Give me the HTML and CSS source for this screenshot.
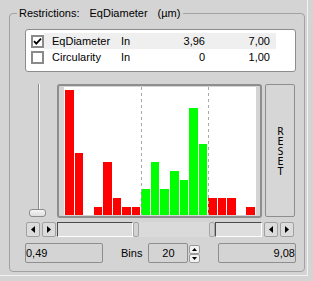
FILE: index.html
```html
<!DOCTYPE html>
<html lang="en">
<head>
    <meta charset="UTF-8">
    <title>Restrictions</title>
    <link rel="stylesheet" href="styles.css">
</head>
<body>
    <div class="window">
        <fieldset class="restrictions">
            <legend><span>Restrictions:</span><span class="legend-gap">EqDiameter</span><span class="legend-gap">(µm)</span></legend>

            <div class="group-body">
                <div class="param-list">
                    <div class="param-row">
                        <span class="check">
                            <svg width="9" height="9" viewBox="0 0 9 9"><path d="M1 4.2L3.3 6.6L8 1.6" fill="none" stroke="#000" stroke-width="1.8"/></svg>
                        </span>
                        <div class="cells selected">
                            <span class="name">EqDiameter</span>
                            <span class="mode">In</span>
                            <span class="num lo">3,96</span>
                            <span class="num hi">7,00</span>
                        </div>
                    </div>
                    <div class="param-row">
                        <span class="check"></span>
                        <div class="cells">
                            <span class="name">Circularity</span>
                            <span class="mode">In</span>
                            <span class="num lo">0</span>
                            <span class="num hi">1,00</span>
                        </div>
                    </div>
                </div>

                <div class="histogram-area">
                    <div class="vslider">
                        <div class="vtrack"></div>
                        <div class="vthumb"></div>
                    </div>

                    <div class="plot">
                        <div class="bins">
                            <div class="bar out" style="height:125px"></div>
                            <div class="bar out" style="height:62px"></div>
                            <div class="bar out" style="height:0"></div>
                            <div class="bar out" style="height:8px"></div>
                            <div class="bar out" style="height:53px"></div>
                            <div class="bar out" style="height:17px"></div>
                            <div class="bar out" style="height:8px"></div>
                            <div class="bar out" style="height:8px"></div>
                            <div class="bar in" style="height:26px"></div>
                            <div class="bar in" style="height:53px"></div>
                            <div class="bar in" style="height:26px"></div>
                            <div class="bar in" style="height:44px"></div>
                            <div class="bar in" style="height:35px"></div>
                            <div class="bar in" style="height:107px"></div>
                            <div class="bar in" style="height:71px"></div>
                            <div class="bar out" style="height:17px"></div>
                            <div class="bar out" style="height:17px"></div>
                            <div class="bar out" style="height:17px"></div>
                            <div class="bar out" style="height:0"></div>
                            <div class="bar out" style="height:8px"></div>

                            <div class="limit" style="left:77px"></div>
                            <div class="limit" style="left:144px"></div>
                        </div>
                    </div>

                    <button class="reset"><span>RESET</span></button>
                </div>

                <div class="range-row">
                    <button class="arrow"><svg width="4" height="7" viewBox="0 0 4 7"><path d="M4 0V7L0 3.5Z"/></svg></button>
                    <button class="arrow"><svg width="4" height="7" viewBox="0 0 4 7"><path d="M0 0V7L4 3.5Z"/></svg></button>
                    <div class="range">
                        <div class="range-well lo"></div>
                        <div class="range-thumb"></div>
                        <div class="range-mid"></div>
                        <div class="range-thumb"></div>
                        <div class="range-well hi"></div>
                    </div>
                    <button class="arrow"><svg width="4" height="7" viewBox="0 0 4 7"><path d="M4 0V7L0 3.5Z"/></svg></button>
                    <button class="arrow"><svg width="4" height="7" viewBox="0 0 4 7"><path d="M0 0V7L4 3.5Z"/></svg></button>
                </div>

                <div class="value-row">
                    <div class="field">0,49</div>
                    <span class="bins-label">Bins</span>
                    <div class="field spin-field">20</div>
                    <div class="spin">
                        <button class="spin-btn"><svg width="5" height="3" viewBox="0 0 5 3"><path d="M0 3H5L2.5 0Z"/></svg></button>
                        <button class="spin-btn"><svg width="5" height="3" viewBox="0 0 5 3"><path d="M0 0H5L2.5 3Z"/></svg></button>
                    </div>
                    <div class="field right">9,08</div>
                </div>
            </div>
        </fieldset>
    </div>
</body>
</html>
```

FILE: styles.css
```css
* {
    box-sizing: border-box;
}

body {
    margin: 0;
    background: #d4d4d4;
    font-family: "Liberation Sans", Arial, sans-serif;
    font-size: 11px;
    color: #000;
}

.window {
    width: 308px;
    height: 276px;
    padding: 7px 0 0 9px;
    border-right: 1px solid #f2f2f2;
    border-bottom: 1px solid #f2f2f2;
}

/* Group box */
.restrictions {
    margin: 0;
    width: 295px;
    height: 265px;
    padding: 9px 8px 0 15px;
    border: 1px solid #a2a2a2;
    border-radius: 4px;
}

.restrictions legend {
    margin-left: -8px;
    padding: 0 3px 0 2px;
    line-height: 13px;
}

.legend-gap {
    margin-left: 10px;
}

.group-body {
    display: flex;
    flex-direction: column;
}

/* Parameter list */
.param-list {
    height: 43px;
    background: #fff;
    border: 1px solid #8c8c8c;
    border-radius: 3px;
    padding: 3px 0 0 5px;
}

.param-row {
    display: flex;
    align-items: center;
    height: 16px;
}

.check {
    width: 13px;
    height: 13px;
    border: 2px solid #8a8a8a;
    background: #fff;
    display: flex;
    align-items: center;
    justify-content: center;
}

.cells {
    display: flex;
    align-items: center;
    width: 232px;
    height: 100%;
    padding-left: 8px;
}

.cells.selected {
    background: #efefef;
}

.name {
    width: 69px;
}

.mode {
    width: 40px;
}

.num {
    text-align: right;
}

.num.lo {
    width: 44px;
}

.num.hi {
    width: 65px;
}

/* Histogram */
.histogram-area {
    display: flex;
    height: 134px;
    margin-top: 12px;
}

.vslider {
    width: 32px;
    display: flex;
    flex-direction: column;
    padding-bottom: 1px;
}

.vtrack {
    flex: 1;
    width: 2px;
    margin-left: 13px;
    border-left: 1px solid #8a8a8a;
    border-right: 1px solid #fafafa;
}

.vthumb {
    width: 17px;
    height: 8px;
    margin: -1px 0 0 4px;
    border: 1px solid #8c8c8c;
    border-radius: 3px;
    background: linear-gradient(#f6f6f6, #dedede);
}

.plot {
    width: 205px;
    height: 134px;
    border: 2px solid #8e8e8e;
    border-radius: 3px;
    padding: 1px 4px 1px 5px;
}

.bins {
    position: relative;
    height: 100%;
    background: #fff;
    display: flex;
    align-items: flex-end;
    gap: 1px;
    padding: 0 1px;
}

.bar {
    flex: 1;
}

.bar.out {
    background: #ff0000;
}

.bar.in {
    background: #00ff00;
}

.limit {
    position: absolute;
    top: 0;
    bottom: 0;
    width: 1px;
    background: repeating-linear-gradient(to bottom, #a8a8a8 0 3px, transparent 3px 6px);
}

.reset {
    width: 30px;
    height: 133px;
    margin-left: 3px;
    padding: 0;
    border: 1px solid #8e8e8e;
    border-radius: 2px;
    background: #d6d6d6;
    display: flex;
    align-items: center;
    justify-content: center;
}

.reset span {
    writing-mode: vertical-lr;
    text-orientation: upright;
    font-family: "DejaVu Sans Mono", monospace;
    font-size: 10px;
    letter-spacing: -1px;
    line-height: 1;
    color: #000;
}

/* Range scroller */
.range-row {
    display: flex;
    height: 15px;
    margin-top: 4px;
    padding-left: 1px;
}

.arrow {
    width: 14px;
    height: 15px;
    padding: 0;
    margin-right: 2px;
    border: 1px solid #a0a0a0;
    border-radius: 2px;
    background: #dcdcdc;
    display: flex;
    align-items: center;
    justify-content: center;
}

.range {
    display: flex;
    width: 205px;
    margin: 0 2px 0 -1px;
    background: #dadada;
}

.range-well {
    border-top: 1px solid #4a4a4a;
    border-left: 1px solid #4a4a4a;
    border-bottom: 1px solid #fff;
    border-right: 1px solid #fff;
    background: #dedede;
}

.range-well.lo {
    width: 76px;
}

.range-well.hi {
    flex: 1;
}

.range-thumb {
    width: 6px;
    border: 1px solid #a4a4a4;
    border-radius: 2px;
    background: #d2d2d2;
}

.range-mid {
    width: 70px;
}

/* Values */
.value-row {
    display: flex;
    height: 20px;
    margin-top: 6px;
}

.field {
    width: 78px;
    height: 20px;
    border: 1px solid #8e8e8e;
    border-radius: 2px;
    display: flex;
    align-items: center;
}

.field.right {
    margin-left: auto;
    justify-content: flex-end;
}

.bins-label {
    margin: 0 6px 0 18px;
    line-height: 20px;
}

.spin-field {
    width: 40px;
    justify-content: center;
}

.spin {
    width: 11px;
    height: 18px;
    margin: 2px 0 0 1px;
    display: flex;
    flex-direction: column;
}

.spin-btn {
    flex: 1;
    padding: 0;
    border: 1px solid #9a9a9a;
    border-radius: 2px;
    background: #f2f2f2;
    display: flex;
    align-items: center;
    justify-content: center;
}
```
